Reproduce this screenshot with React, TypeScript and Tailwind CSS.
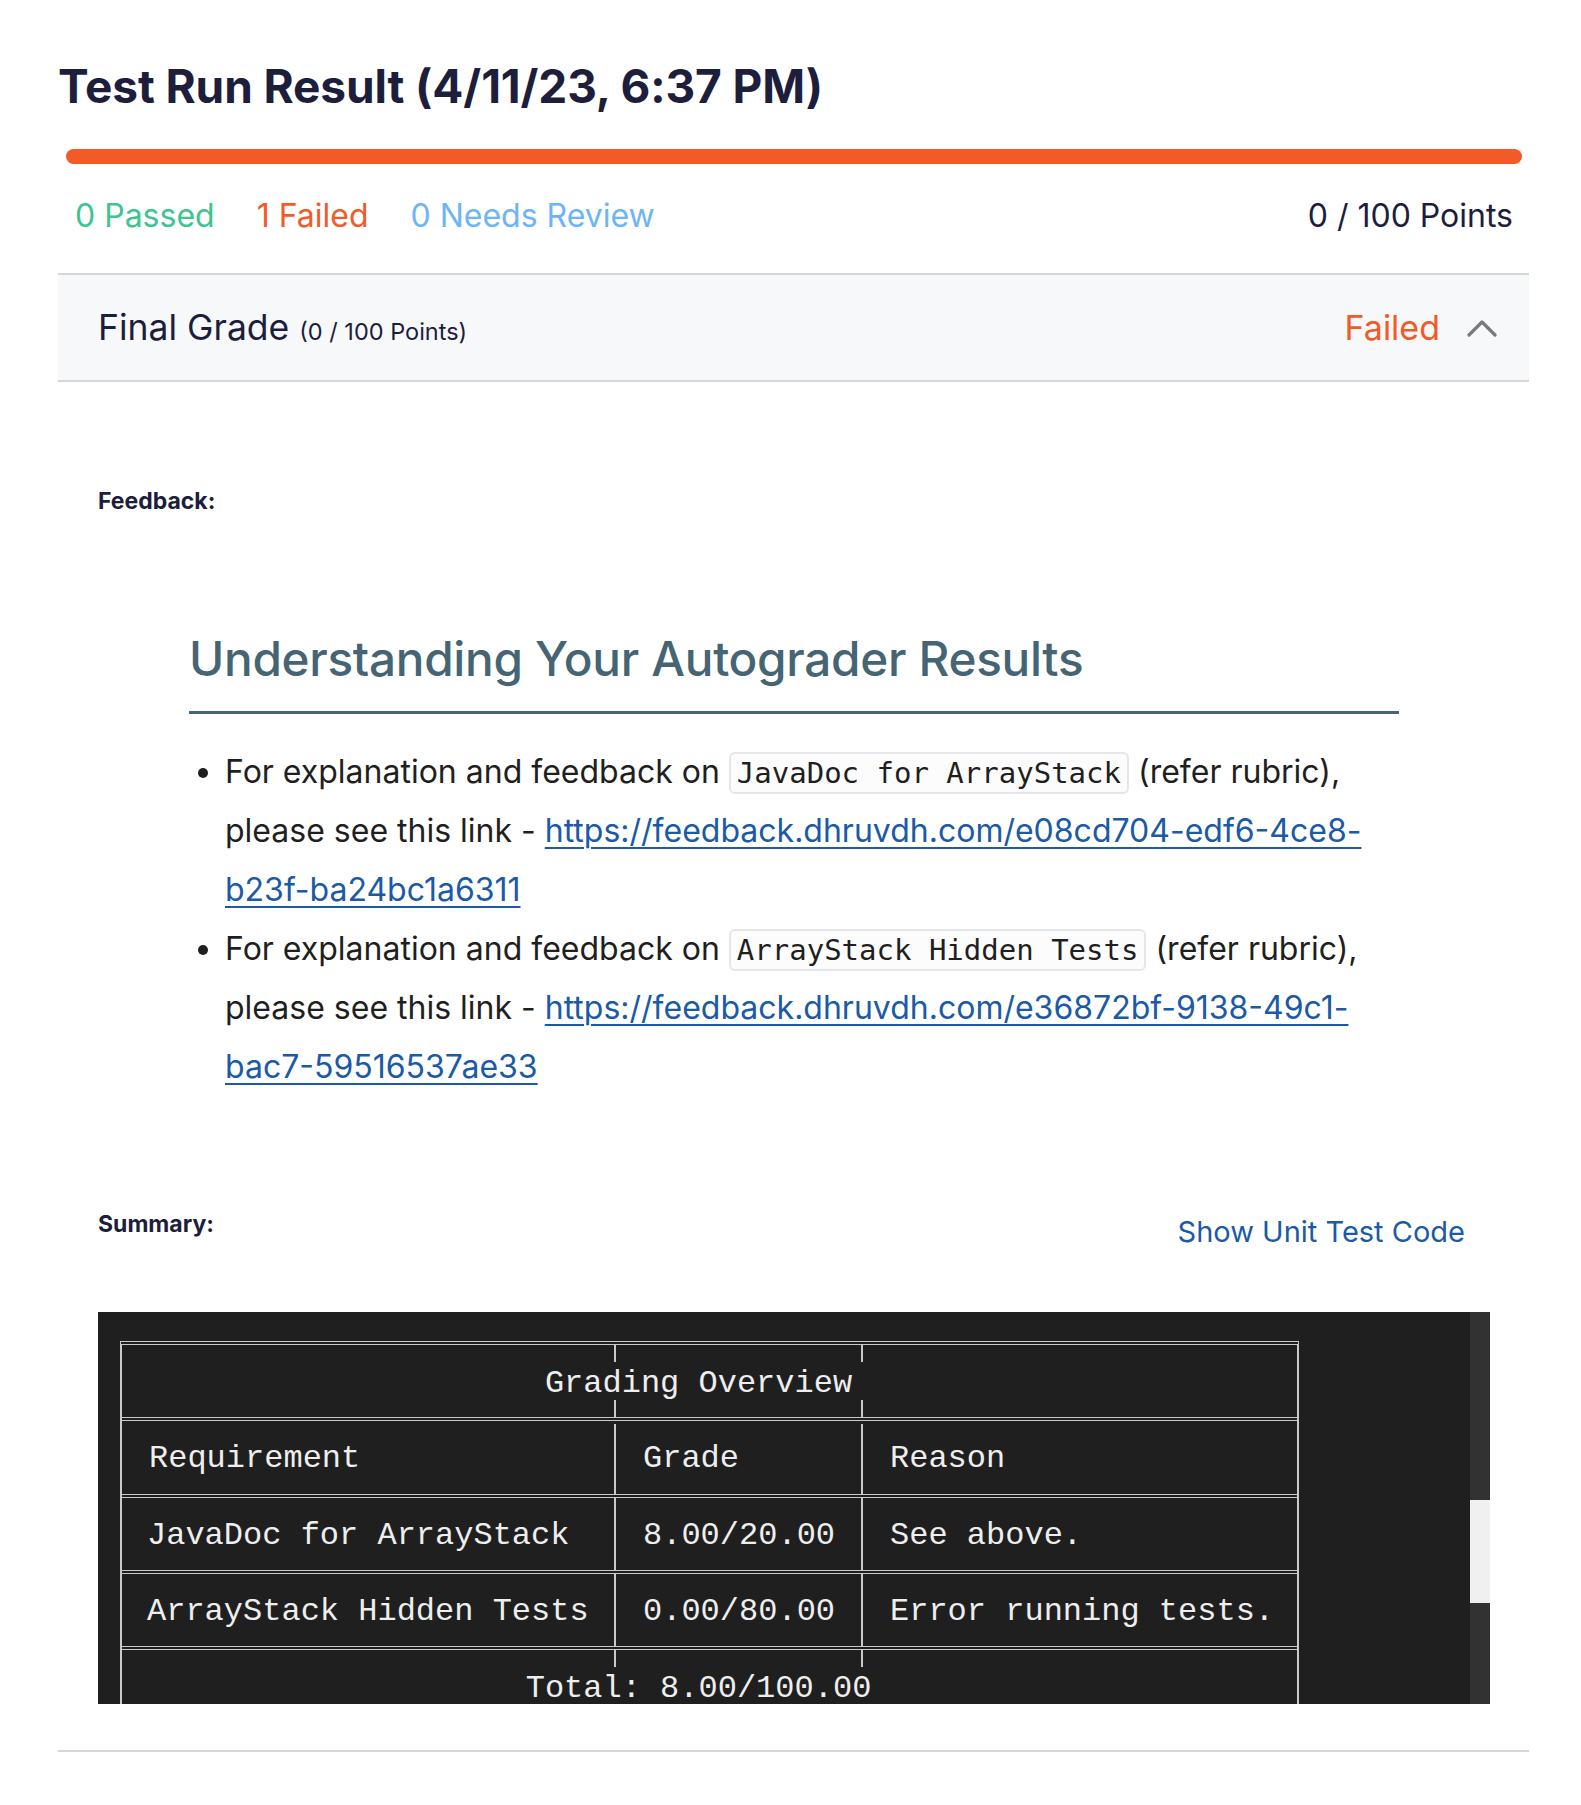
import React from 'react';

const rows = [
  { req: 'JavaDoc for ArrayStack', grade: '8.00/20.00', reason: 'See above.' },
  { req: 'ArrayStack Hidden Tests', grade: '0.00/80.00', reason: 'Error running tests.' },
];

function Code({ children }: { children: React.ReactNode }) {
  return (
    <code className="rounded-[6px] border-2 border-[#e4e6ea] bg-[#fcfcfc] px-[6px] py-[2px] font-['DejaVu_Sans_Mono',monospace] text-[29px] leading-none text-[#1f1f1f]">
      {children}
    </code>
  );
}

function FeedbackLink({ href }: { href: string }) {
  return (
    <a
      href={href}
      className="text-[#1a5aa6] underline decoration-2 underline-offset-[5px]"
    >
      {href}
    </a>
  );
}

function GradingTable() {
  return (
    <div className="w-[1179px] border-x-2 border-t-[4px] border-double border-[#c9c9c9] font-['Liberation_Mono',monospace] text-[32px] text-[#eeeeee]">
      <div className="relative flex h-[72px] items-center justify-center pt-[5px]">
        <span className="mr-[22px]">Grading Overview</span>
        <span className="absolute left-[492px] top-0 h-[17px] w-[2px] bg-[#c9c9c9]" />
        <span className="absolute left-[739px] top-0 h-[17px] w-[2px] bg-[#c9c9c9]" />
        <span className="absolute bottom-0 left-[492px] h-[17px] w-[2px] bg-[#c9c9c9]" />
        <span className="absolute bottom-0 left-[739px] h-[17px] w-[2px] bg-[#c9c9c9]" />
      </div>
      <div className="grid h-[77px] grid-cols-[494px_247px_1fr] border-t-[4px] border-double border-[#c9c9c9] pt-[3px]">
        <div className="flex items-center border-r-2 border-[#c9c9c9] pl-[27px]">Requirement</div>
        <div className="flex items-center border-r-2 border-[#c9c9c9] pl-[27px]">Grade</div>
        <div className="flex items-center pl-[27px]">Reason</div>
      </div>
      {rows.map((r) => (
        <div
          key={r.req}
          className="grid h-[76px] grid-cols-[494px_247px_1fr] border-t-[4px] border-double border-[#c9c9c9]"
        >
          <div className="flex items-center whitespace-pre border-r-2 border-[#c9c9c9] pl-[25px] pt-[3px]">{r.req}</div>
          <div className="flex items-center border-r-2 border-[#c9c9c9] pl-[27px] pt-[3px]">{r.grade}</div>
          <div className="flex items-center pl-[27px] pt-[3px]">{r.reason}</div>
        </div>
      ))}
      <div className="relative flex h-[76px] items-center justify-center border-t-[4px] border-double border-[#c9c9c9] pt-[5px]">
        <span className="mr-[22px]">Total: 8.00/100.00</span>
        <span className="absolute left-[492px] top-0 h-[17px] w-[2px] bg-[#c9c9c9]" />
        <span className="absolute left-[739px] top-0 h-[17px] w-[2px] bg-[#c9c9c9]" />
      </div>
    </div>
  );
}

export default function App() {
  return (
    <div className="min-h-[1805px] bg-white pl-[58px] pr-[52px] pt-[60px] font-['Inter',sans-serif]">
      <h1 className="text-[46px] font-bold leading-[52px] tracking-[-0.1px] text-[#1c1e3c]">
        Test Run Result (4/11/23, 6:37 PM)
      </h1>

      <div className="ml-[8px] mr-[7px] mt-[37px] h-[15px] rounded-full bg-[#f25a28]" />

      <div className="mt-[32px] flex h-[40px] items-center justify-between pl-[17px] pr-[16px] text-[32px]">
        <div className="flex items-center gap-[42px]">
          <span className="text-[#3ec48f]">0 Passed</span>
          <span className="text-[#f25a28]">1 Failed</span>
          <span className="text-[#6db5f5]">0 Needs Review</span>
        </div>
        <span className="text-[#1c1e3c]">0 / 100 Points</span>
      </div>

      <div className="mt-[37px] border-b-2 border-[#d6d6d6]">
        <button className="flex h-[109px] w-full items-center justify-between border-y-2 border-[#d6d6d6] bg-[#f7f8fa] pl-[40px] pr-[32px] text-left">
          <span className="text-[#1c1e3c]">
            <span className="text-[35.5px]">Final Grade</span>
            <span className="ml-[10px] text-[23.5px]">(0 / 100 Points)</span>
          </span>
          <span className="flex items-center gap-[27px]">
            <span className="text-[34px] text-[#f25a28]">Failed</span>
            <svg width="30" height="20" viewBox="0 0 30 20" fill="none">
              <polyline
                points="2,17 15,4 28,17"
                stroke="#7a7a7a"
                strokeWidth="3.2"
                strokeLinecap="round"
                strokeLinejoin="round"
              />
            </svg>
          </span>
        </button>

        <div className="pb-[46px] pl-[40px] pr-[39px]">
          <p className="mt-[104px] text-[23px] font-bold leading-[30px] text-[#1c1e3c]">Feedback:</p>

          <div className="mx-auto mt-[115px] w-[1210px] text-[#1f1f1f]">
            <h2 className="border-b-[3px] border-[#456574] pb-[24px] text-[47.7px] font-medium leading-[56px] tracking-[-0.3px] text-[#456574]">
              Understanding Your Autograder Results
            </h2>
            <ul className="mt-[28px] list-disc pl-[36px] text-[32px] leading-[59px]">
              <li>
                For explanation and feedback on <Code>JavaDoc for ArrayStack</Code> (refer rubric), please see this link -{' '}
                <FeedbackLink href="https://feedback.dhruvdh.com/e08cd704-edf6-4ce8-b23f-ba24bc1a6311" />
              </li>
              <li>
                For explanation and feedback on <Code>ArrayStack Hidden Tests</Code> (refer rubric), please see this link -{' '}
                <FeedbackLink href="https://feedback.dhruvdh.com/e36872bf-9138-49c1-bac7-59516537ae33" />
              </li>
            </ul>
          </div>

          <div className="mt-[113px] flex items-start justify-between">
            <p className="text-[23px] font-bold leading-[30px] text-[#1c1e3c]">Summary:</p>
            <button className="mr-[25px] mt-[5px] text-[29px] leading-[36px] text-[#1a5aa6]">Show Unit Test Code</button>
          </div>

          <div className="mt-[62px] flex h-[392px] overflow-hidden bg-[#1f1f1f]">
            <div className="flex-1 overflow-hidden pl-[22px] pt-[29px]">
              <GradingTable />
            </div>
            <div className="flex w-[20px] flex-col">
              <div className="h-[188px] bg-[#323232]" />
              <div className="h-[103px] bg-[#f0f0f0]" />
              <div className="flex-1 bg-[#323232]" />
            </div>
          </div>
        </div>
      </div>
    </div>
  );
}
